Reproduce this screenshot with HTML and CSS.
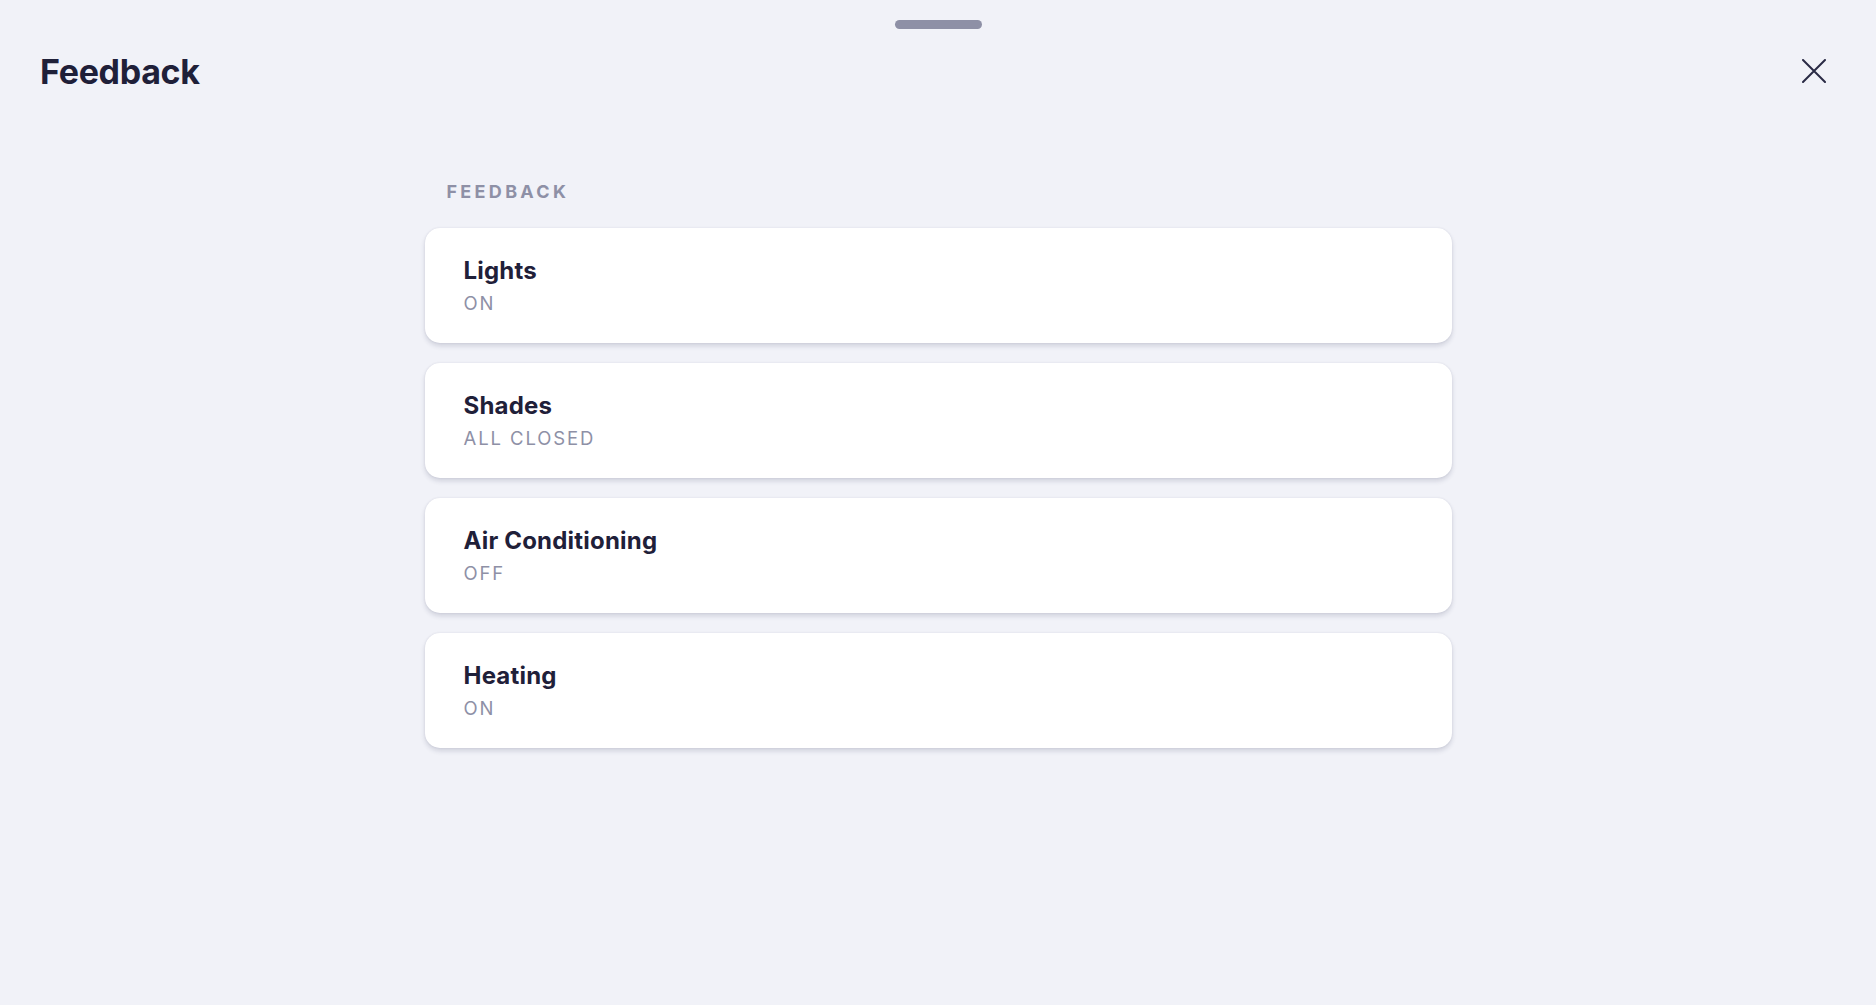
FILE: index.html
```html
<!DOCTYPE html>
<html lang="en">
<head>
<meta charset="utf-8">
<title>Feedback</title>
<link rel="stylesheet" href="styles.css">
</head>
<body>
<div class="sheet">
  <div class="handle"></div>
  <header class="header">
    <h1 class="title">Feedback</h1>
    <button class="close" aria-label="Close">
      <svg width="24" height="24" viewBox="0 0 24 24" fill="none" stroke="#2a2b45" stroke-width="2" stroke-linecap="round">
        <path d="M1 1 L23 23 M23 1 L1 23"/>
      </svg>
    </button>
  </header>
  <main class="content">
    <div class="section-label">FEEDBACK</div>
    <div class="list">
      <div class="card"><div class="name">Lights</div><div class="state">ON</div></div>
      <div class="card"><div class="name">Shades</div><div class="state">ALL CLOSED</div></div>
      <div class="card"><div class="name">Air Conditioning</div><div class="state">OFF</div></div>
      <div class="card"><div class="name">Heating</div><div class="state">ON</div></div>
    </div>
  </main>
</div>
</body>
</html>
```
FILE: styles.css
```css
html, body {
  margin: 0;
  padding: 0;
  background: #f1f2f8;
}
body {
  font-family: "Inter", "Lato", "Noto Sans", sans-serif;
  font-variant-ligatures: none;
  color: #1f2039;
  width: 1876px;
  height: 1005px;
  overflow: hidden;
}
.sheet {
  display: flex;
  flex-direction: column;
}
.handle {
  width: 87px;
  height: 9px;
  border-radius: 5px;
  background: #8e90a6;
  margin: 20px auto 0;
}
.header {
  display: flex;
  justify-content: space-between;
  align-items: center;
  padding: 0 50px 0 40px;
  margin-top: 22px;
  height: 42px;
}
.title {
  margin: 0;
  font-size: 34px;
  font-weight: 700;
  line-height: 42px;
  letter-spacing: -0.3px;
  color: #1f2039;
}
.close {
  border: 0;
  background: none;
  padding: 0;
  width: 24px;
  height: 24px;
  display: flex;
  cursor: pointer;
  margin-top: -2px;
}
.content {
  width: 1027px;
  margin: 0 auto;
  padding-top: 88px;
}
.section-label {
  padding-left: 22px;
  font-size: 18px;
  font-weight: 700;
  letter-spacing: 3.3px;
  color: #8e90a6;
  line-height: 22px;
}
.list {
  display: flex;
  flex-direction: column;
  gap: 20px;
  margin-top: 25px;
}
.card {
  background: #ffffff;
  border-radius: 15px;
  height: 115px;
  box-sizing: border-box;
  padding: 28px 39px 0;
  box-shadow: 0 3px 5px rgba(40, 42, 80, 0.16), 0 0 2px rgba(40, 42, 80, 0.1);
}
.name {
  font-size: 24px;
  font-weight: 700;
  line-height: 30px;
  letter-spacing: 0.2px;
  color: #1f2039;
}
.state {
  font-size: 18.5px;
  font-weight: 400;
  letter-spacing: 1.9px;
  line-height: 24px;
  margin-top: 5px;
  color: #8e90a6;
}
```
